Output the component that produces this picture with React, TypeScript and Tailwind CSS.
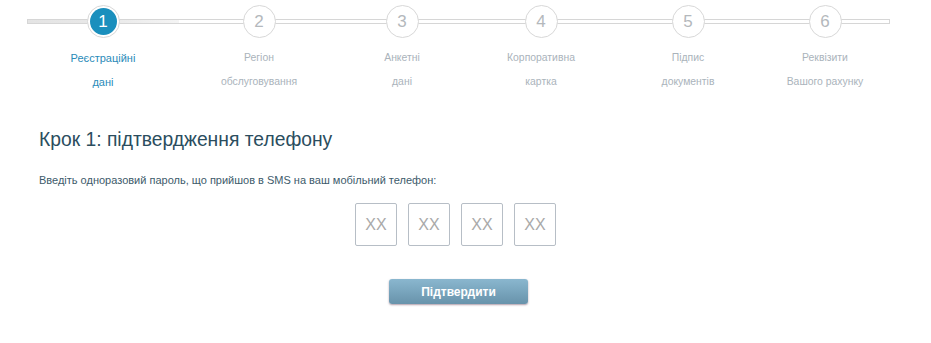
const steps = [
  { n: 1, a: "Реєстраційні", b: "дані", w: "w-[152px]" },
  { n: 2, a: "Регіон", b: "обслуговування", w: "w-[160px]" },
  { n: 3, a: "Анкетні", b: "дані", w: "w-[126px]" },
  { n: 4, a: "Корпоративна", b: "картка", w: "w-[152px]" },
  { n: 5, a: "Підпис", b: "документів", w: "w-[142px]" },
  { n: 6, a: "Реквізити", b: "Вашого рахунку", w: "w-[132px]" },
];

function Step({ n, a, b, w }: { n: number; a: string; b: string; w: string }) {
  const active = n === 1;
  return (
    <div className={`${w} flex shrink-0 flex-col items-center`}>
      <div className="relative flex h-[33px] w-full items-center justify-center">
        <div
          className={`absolute inset-x-0 top-[14px] h-[5px] border-y border-[#d6d6d6] ${
            active
              ? "border-l bg-gradient-to-r from-[#e4e4e4] via-[#e8e8e8] to-[#f4f4f4]"
              : "bg-white"
          } ${n === 6 ? "right-[1px] border-r" : ""}`}
        />
        {active ? (
          <div className="relative flex size-[33px] items-center justify-center rounded-full border border-[#d8d8d8] bg-white">
            <div className="flex size-[27px] items-center justify-center rounded-full bg-[#1a8fbd] text-[17px] text-white">
              {n}
            </div>
          </div>
        ) : (
          <div className="relative flex size-[33px] items-center justify-center rounded-full border border-[#d8d8d8] bg-white text-[17px] text-[#b4b8bc]">
            {n}
          </div>
        )}
      </div>
      <div
        className={`mt-[8px] text-center leading-[24px] ${
          active ? "text-[11px] text-[#2a8bb9]" : "text-[10.4px] text-[#aab3bb]"
        }`}
      >
        <div>{a}</div>
        <div>{b}</div>
      </div>
    </div>
  );
}

export default function App() {
  return (
    <div className="h-[343px] w-[931px] bg-white font-['Liberation_Sans',Arial,sans-serif]">
      {/* Stepper */}
      <div className="flex pl-[27px] pt-[5px]">
        {steps.map((s) => (
          <Step key={s.n} {...s} />
        ))}
      </div>

      {/* Content */}
      <div className="px-[39px] pt-[34px]">
        <h2 className="text-[19.3px] leading-[24px] text-[#2b4d5e]">
          Крок 1: підтвердження телефону
        </h2>
        <p className="mt-[20px] text-[11px] leading-[16px] text-[#3d5b6b]">
          Введіть одноразовий пароль, що прийшов в SMS на ваш мобільний телефон:
        </p>
        <div className="mt-[15px] flex justify-center gap-[11px] pr-[20px]">
          {[0, 1, 2, 3].map((i) => (
            <input
              key={i}
              placeholder="XX"
              className="h-[43px] w-[42px] rounded-[2px] border border-[#b7bec6] bg-white text-center text-[16px] text-[#999] outline-none placeholder:text-[#a9a9a9]"
            />
          ))}
        </div>
        <div className="mt-[33px] flex justify-center pr-[14px]">
          <button className="h-[25px] w-[139px] rounded-[3px] bg-gradient-to-b from-[#8ab7cf] to-[#6893ab] text-[12px] font-bold text-white shadow-[0_1px_2px_rgba(120,90,110,0.6)]">
            Підтвердити
          </button>
        </div>
      </div>
    </div>
  );
}
